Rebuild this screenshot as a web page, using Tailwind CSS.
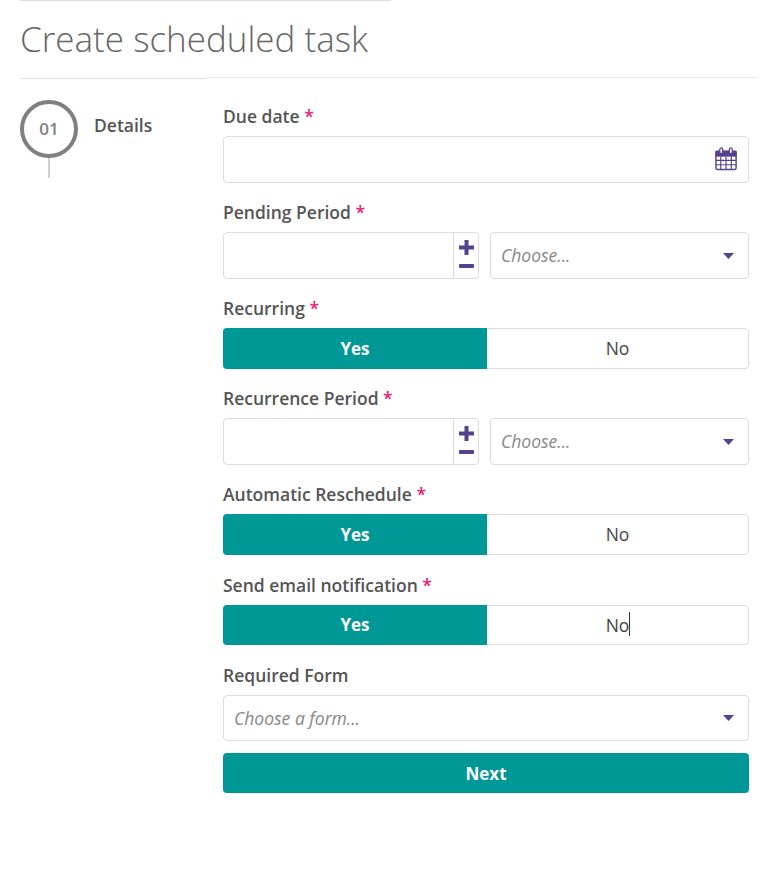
<!DOCTYPE html>
<html lang="en">
<head>
	<meta charset="UTF-8" />
	<title>Create scheduled task</title>
	<script src="https://cdn.jsdelivr.net/npm/@tailwindcss/browser@4"></script>
</head>
<body class="bg-white min-h-screen font-['Open_Sans',sans-serif] text-[#555555]">
	<header class="w-[737px] ml-5">
		<div class="h-px w-[371px] bg-[#dedede]"></div>
		<h1 class="h-[76px] leading-[75px] text-[35px] font-light text-[#666666]">Create scheduled task</h1>
		<div class="flex items-start">
			<div class="w-[187px] h-px mt-px bg-[#e4e4e4]"></div>
			<div class="flex-1 h-px bg-[#e8e8e8]"></div>
		</div>
	</header>

	<main class="flex pt-[21px] pl-5">
		<aside class="w-[203px] flex items-start">
			<div class="flex flex-col items-center">
				<div class="w-[58px] h-[58px] rounded-full border-4 border-[#808080] flex items-center justify-center text-[17px] font-semibold text-[#808080]">01</div>
				<div class="w-0.5 h-5 bg-[#d0d0d0]"></div>
			</div>
			<div class="ml-4 mt-[13px] text-[17.5px] font-semibold leading-6">Details</div>
		</aside>

		<form class="w-[526px] flex flex-col">
			<label class="h-6 mt-1 mb-2 text-[17.5px] leading-6 font-semibold">Due date <span class="text-[#e6197d]">*</span></label>
			<div class="h-[47px] rounded border border-[#dddddd] flex items-center justify-end pr-[10px] pb-0.5">
				<svg width="23" height="24" viewBox="0 0 24 25" fill="none" stroke="#54428e">
					<rect x="1" y="4.5" width="21" height="19" rx="1.5" stroke-width="1.5" />
					<rect x="1" y="4.5" width="21" height="5" fill="#54428e" />
					<path d="M1 14h21M1 18.5h21M6 10v13M11.500 10v13M17 10v13" stroke-width="1.200" />
					<rect x="5" y="1" width="3" height="6" rx="1.500" fill="white" stroke-width="1.300" />
					<rect x="15" y="1" width="3" height="6" rx="1.500" fill="white" stroke-width="1.300" />
				</svg>
			</div>

			<label class="h-6 mt-[17px] mb-2 text-[17.5px] leading-6 font-semibold">Pending Period <span class="text-[#e6197d]">*</span></label>
			<div class="flex gap-[11px]">
				<div class="w-[256px] h-[47px] rounded border border-[#dddddd] flex justify-end">
					<div class="w-[25px] pb-1 border-l border-[#dddddd] flex flex-col items-center justify-center gap-[9px]">
						<svg width="15" height="15" viewBox="0 0 15 15" fill="#54428e"><path d="M5.500 0h4v5.500H15v4H9.500V15h-4V9.500H0v-4h5.500z" /></svg>
						<svg width="15" height="4" viewBox="0 0 15 4" fill="#54428e"><rect width="15" height="4" rx="1" /></svg>
					</div>
				</div>
				<div class="flex-1 h-[47px] rounded border border-[#dddddd] flex items-center justify-between pl-2.5 pr-[14px]">
					<span class="text-[17.5px] italic text-[#888888]">Choose...</span>
					<svg width="11" height="6" viewBox="0 0 11 6" fill="#54428e"><path d="M0 0h11L5.500 6z" /></svg>
				</div>
			</div>

			<label class="h-6 mt-[17px] mb-2 text-[17.5px] leading-6 font-semibold">Recurring <span class="text-[#e6197d]">*</span></label>
			<div class="flex h-[41px] rounded border border-[#dddddd]">
				<div class="w-[264px] -m-px rounded-l bg-[#009797] text-white font-bold text-[17px] flex items-center justify-center">Yes</div>
				<div class="flex-1 ml-px text-[17.5px] text-[#444444] flex items-center justify-center">No</div>
			</div>

			<label class="h-6 mt-[17px] mb-2 text-[17.5px] leading-6 font-semibold">Recurrence Period <span class="text-[#e6197d]">*</span></label>
			<div class="flex gap-[11px]">
				<div class="w-[256px] h-[47px] rounded border border-[#dddddd] flex justify-end">
					<div class="w-[25px] pb-1 border-l border-[#dddddd] flex flex-col items-center justify-center gap-[9px]">
						<svg width="15" height="15" viewBox="0 0 15 15" fill="#54428e"><path d="M5.500 0h4v5.500H15v4H9.500V15h-4V9.500H0v-4h5.500z" /></svg>
						<svg width="15" height="4" viewBox="0 0 15 4" fill="#54428e"><rect width="15" height="4" rx="1" /></svg>
					</div>
				</div>
				<div class="flex-1 h-[47px] rounded border border-[#dddddd] flex items-center justify-between pl-2.5 pr-[14px]">
					<span class="text-[17.5px] italic text-[#888888]">Choose...</span>
					<svg width="11" height="6" viewBox="0 0 11 6" fill="#54428e"><path d="M0 0h11L5.500 6z" /></svg>
				</div>
			</div>

			<label class="h-6 mt-[17px] mb-2 text-[17.5px] leading-6 font-semibold">Automatic Reschedule <span class="text-[#e6197d]">*</span></label>
			<div class="flex h-[41px] rounded border border-[#dddddd]">
				<div class="w-[264px] -m-px rounded-l bg-[#009797] text-white font-bold text-[17px] flex items-center justify-center">Yes</div>
				<div class="flex-1 ml-px text-[17.5px] text-[#444444] flex items-center justify-center">No</div>
			</div>

			<label class="h-6 mt-[18px] mb-2 text-[17.5px] leading-6 font-semibold">Send email notification <span class="text-[#e6197d]">*</span></label>
			<div class="flex h-10 rounded border border-[#dddddd]">
				<div class="w-[264px] -m-px rounded-l bg-[#009797] text-white font-bold text-[17px] flex items-center justify-center">Yes</div>
				<div class="flex-1 ml-px text-[17.5px] text-[#444444] flex items-center justify-center">
					<span class="relative">No<span class="absolute -right-px top-0 w-px h-6 bg-[#333333]"></span></span>
				</div>
			</div>

			<label class="h-6 mt-[18px] mb-2 text-[17.5px] leading-6 font-semibold">Required Form</label>
			<div class="h-[46px] rounded border border-[#dddddd] flex items-center justify-between pl-2.5 pr-[14px]">
				<span class="text-[17.5px] italic text-[#888888]">Choose a form...</span>
				<svg width="11" height="6" viewBox="0 0 11 6" fill="#54428e"><path d="M0 0h11L5.500 6z" /></svg>
			</div>

			<button type="button" class="h-10 mt-3 pt-px rounded bg-[#009797] text-white font-bold text-[17px]">Next</button>
		</form>
	</main>
</body>
</html>
